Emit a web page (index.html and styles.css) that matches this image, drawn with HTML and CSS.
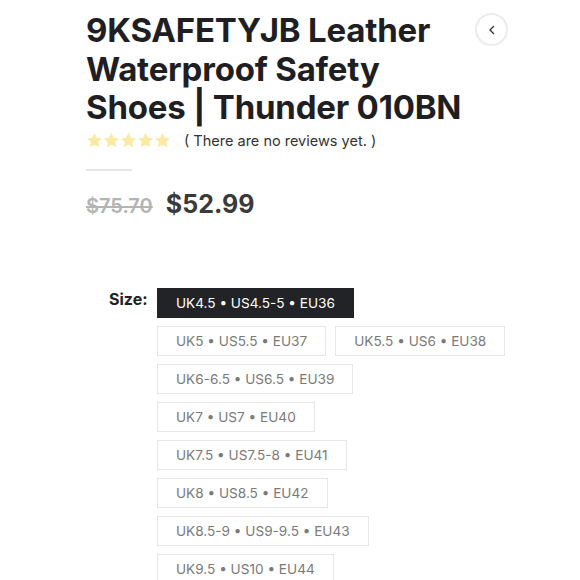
FILE: index.html
```html
<!DOCTYPE html>
<html>
<head>
<meta charset="utf-8">
<link rel="stylesheet" href="styles.css">
</head>
<body>
<div class="page">
  <div class="head">
    <h1 class="title">9KSAFETYJB Leather Waterproof Safety Shoes | Thunder 010BN</h1>
    <button class="back" aria-label="Back">
      <svg width="12" height="12" viewBox="0 0 12 12"><path d="M7.5 2.5 L4 6 L7.5 9.5" fill="none" stroke="#333" stroke-width="1.4" stroke-linecap="round" stroke-linejoin="round"/></svg>
    </button>
  </div>
  <div class="rating">
    <div class="stars">
      <svg viewBox="0 0 24 24"><path d="M12 1.2l3.3 6.9 7.5.9-5.6 5.2 1.5 7.5L12 18l-6.7 3.7 1.5-7.5L1.2 9l7.5-.9z"/></svg>
      <svg viewBox="0 0 24 24"><path d="M12 1.2l3.3 6.9 7.5.9-5.6 5.2 1.5 7.5L12 18l-6.7 3.7 1.5-7.5L1.2 9l7.5-.9z"/></svg>
      <svg viewBox="0 0 24 24"><path d="M12 1.2l3.3 6.9 7.5.9-5.6 5.2 1.5 7.5L12 18l-6.7 3.7 1.5-7.5L1.2 9l7.5-.9z"/></svg>
      <svg viewBox="0 0 24 24"><path d="M12 1.2l3.3 6.9 7.5.9-5.6 5.2 1.5 7.5L12 18l-6.7 3.7 1.5-7.5L1.2 9l7.5-.9z"/></svg>
      <svg viewBox="0 0 24 24"><path d="M12 1.2l3.3 6.9 7.5.9-5.6 5.2 1.5 7.5L12 18l-6.7 3.7 1.5-7.5L1.2 9l7.5-.9z"/></svg>
    </div>
    <span class="reviews">( There are no reviews yet. )</span>
  </div>
  <div class="divider"></div>
  <div class="price">
    <del class="old">$75.70</del>
    <span class="new">$52.99</span>
  </div>
  <div class="sizes">
    <div class="label">Size:</div>
    <div class="options">
      <span class="opt active">UK4.5 • US4.5-5 • EU36</span>
      <span class="opt">UK5 • US5.5 • EU37</span>
      <span class="opt">UK5.5 • US6 • EU38</span>
      <span class="opt">UK6-6.5 • US6.5 • EU39</span>
      <span class="opt">UK7 • US7 • EU40</span>
      <span class="opt">UK7.5 • US7.5-8 • EU41</span>
      <span class="opt">UK8 • US8.5 • EU42</span>
      <span class="opt">UK8.5-9 • US9-9.5 • EU43</span>
      <span class="opt">UK9.5 • US10 • EU44</span>
    </div>
  </div>
</div>
</body>
</html>
```

FILE: styles.css
```css
* { box-sizing: border-box; }
html, body { margin: 0; padding: 0; background: #fff; }
body { font-family: "Inter", "Liberation Sans", sans-serif; color: #222; }
.page { padding: 11px 0 0 86px; width: 580px; height: 580px; overflow: hidden; }
.head { display: flex; align-items: flex-start; }
.title {
  margin: 0; width: 389px; font-size: 33px; font-weight: 700; line-height: 38.5px;
  color: #1f1f23; letter-spacing: -0.2px;
}
.back {
  margin: 2px 72px 0 auto;
  width: 33px; height: 33px; border-radius: 50%; border: 2px solid #ececec;
  background: #fff; display: flex; align-items: center; justify-content: center; padding: 0;
}
.rating { display: flex; align-items: center; margin-top: 3px; height: 22px; }
.stars { display: flex; gap: 0; }
.stars svg { width: 17px; height: 17px; fill: #fce9a3; }
.reviews { margin-left: 13px; font-size: 14.5px; color: #333; }
.divider { width: 46px; height: 2px; background: #e6e6e6; margin-top: 17px; }
.price { display: flex; align-items: baseline; margin-top: 18px; gap: 13px; }
.old { font-size: 20px; font-weight: 600; color: #b4b4b4; }
.new { font-size: 25px; font-weight: 700; color: #3a3a3a; }
.sizes { display: flex; margin-top: 69px; margin-left: 23px; }
.label { width: 48px; font-size: 16px; font-weight: 700; color: #222; padding-top: 1px; }
.options { width: 350px; display: flex; flex-wrap: wrap; gap: 8px 9px; }
.opt {
  height: 30px; display: flex; align-items: center; padding: 0 18px;
  border: 1px solid #e6e6e6; font-size: 13.6px; color: #7a7a7a; white-space: nowrap;
}
.opt.active { background: #222326; border-color: #222326; color: #fff; }
```
